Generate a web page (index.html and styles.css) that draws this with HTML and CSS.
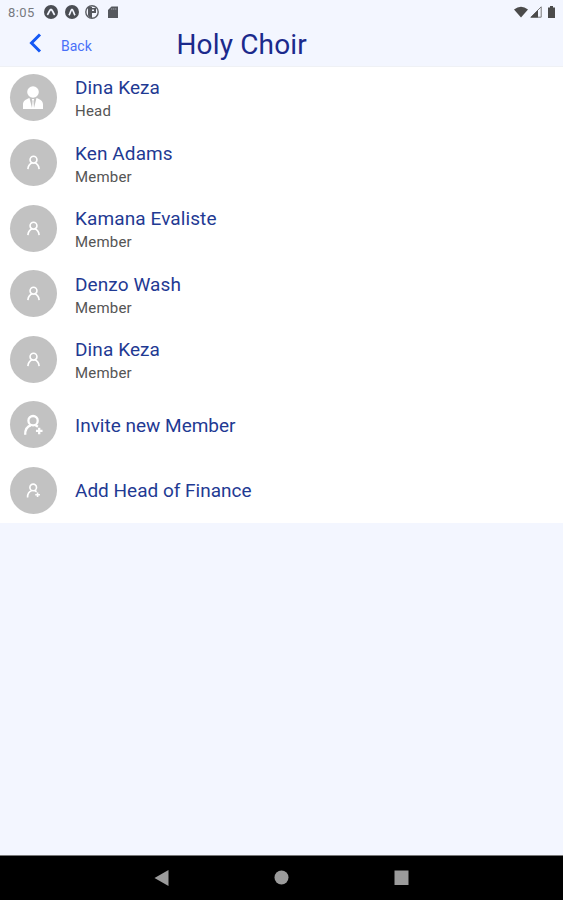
FILE: index.html
```html
<!DOCTYPE html>
<html lang="en">
<head>
  <meta charset="UTF-8" />
  <meta name="viewport" content="width=device-width, initial-scale=1" />
  <title>Holy Choir</title>
  <link rel="stylesheet" href="styles.css">
</head>
<body>
  <!-- shared icons -->
  <svg class="sprite" width="0" height="0">
    <symbol id="icon-user" viewBox="0 0 24 24">
      <circle cx="12" cy="7.500" r="5.500" />
      <path d="M3 22.500c.5-5 3-8.300 6.500-10M21 22.500c-.5-5-3-8.300-6.500-10" />
    </symbol>
    <symbol id="icon-user-add" viewBox="0 0 24 24">
      <circle cx="11.500" cy="7" r="5.300" />
      <path d="M2.500 23c0-5.500 2.500-9.500 6.500-10.500M14 12l3 2M18.500 15v7.500M14.800 18.700h7.500" />
    </symbol>
  </svg>

  <div class="screen">
    <div class="status-bar">
      <span class="clock">8:05</span>
      <svg class="status-icon" viewBox="0 0 14 14">
        <circle cx="7" cy="7" r="7" fill="#4b4e54" />
        <path d="M3.300 9.800C5 8 5.500 4.500 7 4.500S9 8 10.700 9.800" fill="none" stroke="#f3f6ff" stroke-width="1.800" />
      </svg>
      <svg class="status-icon" viewBox="0 0 14 14">
        <circle cx="7" cy="7" r="7" fill="#4b4e54" />
        <path d="M4 10.300C5.500 8 6 4.300 7 4.300S8.500 8 10 10.300" fill="none" stroke="#f3f6ff" stroke-width="1.700" />
      </svg>
      <svg class="status-icon" viewBox="0 0 14 14">
        <circle cx="7" cy="7" r="6.200" fill="#f3f6ff" stroke="#5b5e64" stroke-width="1.400" />
        <path d="M3 2h4v11c-2 0-4-1.500-4-3zM7 3h4v5H7z" fill="#55585e" />
        <path d="M7 4.500h2v1.500H7z" fill="#f3f6ff" />
      </svg>
      <svg class="status-icon" viewBox="0 0 14 14">
        <path d="M5.500 1.500h6.500v11.500H2V5z" fill="#55585e" />
        <path d="M5.800 3v2M7.800 3v2M9.800 3v2" stroke="#9a9da3" stroke-width=".8" />
      </svg>
      <div class="status-right">
        <svg width="14" height="12" viewBox="0 0 14 12"><path d="M0 3.500Q7-2 14 3.500L7 11.500z" fill="#4b4b4b" /></svg>
        <svg width="12" height="12" viewBox="0 0 12 12">
          <path d="M.8 11.200L11.200.8v10.400z" fill="none" stroke="#777" />
          <path d="M.5 11.500L8 4v7.500z" fill="#4b4b4b" />
        </svg>
        <svg class="battery" width="7" height="12" viewBox="0 0 7 12"><path d="M2 0h3v1.500h2V12H0V1.500h2z" fill="#4b4b4b" /></svg>
      </div>
    </div>

    <header class="header">
      <a class="back">
        <svg width="14" height="20" viewBox="0 0 14 20"><path d="M12 1.500L3.500 10l8.500 8.500" /></svg>
        <span>Back</span>
      </a>
      <h1>Holy Choir</h1>
    </header>

    <ul class="members">
      <li>
        <div class="avatar">
          <svg class="icon-head" viewBox="0 0 20 23">
            <circle cx="10" cy="6" r="5.800" />
            <path d="M0 23v-4.500c0-3.500 2.500-5 6.500-6.500L9 22l.5-7-.7-2h2.400l-.7 2 .5 7L13.500 12c4 1.500 6.500 3 6.500 6.500V23z" />
          </svg>
        </div>
        <div class="info"><div class="name">Dina Keza</div><div class="role">Head</div></div>
      </li>
      <li>
        <div class="avatar"><svg class="icon"><use href="#icon-user" /></svg></div>
        <div class="info"><div class="name">Ken Adams</div><div class="role">Member</div></div>
      </li>
      <li>
        <div class="avatar"><svg class="icon"><use href="#icon-user" /></svg></div>
        <div class="info"><div class="name">Kamana Evaliste</div><div class="role">Member</div></div>
      </li>
      <li>
        <div class="avatar"><svg class="icon"><use href="#icon-user" /></svg></div>
        <div class="info"><div class="name">Denzo Wash</div><div class="role">Member</div></div>
      </li>
      <li>
        <div class="avatar"><svg class="icon"><use href="#icon-user" /></svg></div>
        <div class="info"><div class="name">Dina Keza</div><div class="role">Member</div></div>
      </li>
      <li>
        <div class="avatar"><svg class="icon icon-large"><use href="#icon-user-add" /></svg></div>
        <div class="info"><div class="name action">Invite new Member</div></div>
      </li>
      <li>
        <div class="avatar"><svg class="icon"><use href="#icon-user-add" /></svg></div>
        <div class="info"><div class="name action">Add Head of Finance</div></div>
      </li>
    </ul>

    <nav class="nav-bar">
      <svg width="16" height="16" viewBox="0 0 16 16"><path d="M.5 8l14-8v16z" /></svg>
      <svg width="16" height="16" viewBox="0 0 16 16"><circle cx="7.500" cy="7.500" r="7" /></svg>
      <svg width="16" height="16" viewBox="0 0 16 16"><path d="M.5.500h14V15H.5z" /></svg>
    </nav>
  </div>
</body>
</html>
```

FILE: styles.css
```css
* {
  box-sizing: border-box;
}
body {
  margin: 0;
  font-family: Roboto, sans-serif;
  background-color: #f3f6ff;
}
svg {
  display: block;
  flex-shrink: 0;
}
.sprite {
  position: absolute;
}
.screen {
  display: flex;
  flex-direction: column;
  height: 900px;
  overflow: hidden;
}
.status-bar {
  display: flex;
  align-items: center;
  height: 24px;
  padding: 0 8px;
}
.clock {
  width: 29px;
  margin-right: 7px;
  font-size: 13px;
  letter-spacing: 0.4px;
  color: #777a80;
}
.status-icon {
  width: 14px;
  height: 14px;
  margin-right: 6.5px;
}
.status-right {
  display: flex;
  align-items: center;
  gap: 2px;
  margin-left: auto;
}
.battery {
  margin-left: 4px;
}
.header {
  display: flex;
  height: 43px;
  border-bottom: 1px solid #eff1f5;
}
.back {
  display: flex;
  width: 176.5px;
  padding-left: 28px;
  color: #4a70f8;
  font-size: 14px;
}
.back svg {
  margin: 9px 19px 0 0;
  fill: none;
  stroke: #1458f5;
  stroke-width: 3;
}
.back span {
  margin-top: 14px;
  line-height: 17px;
}
.header h1 {
  margin: 4px 0 0;
  font-size: 28px;
  font-weight: 400;
  line-height: 34px;
  letter-spacing: 0.15px;
  color: #1b2a8c;
}
.members {
  display: flex;
  flex-direction: column;
  gap: 18.5px;
  margin: 0;
  padding: 6.5px 9.5px 9px;
  list-style: none;
  background-color: #fff;
}
.members li {
  display: flex;
  align-items: center;
  height: 47px;
}
.avatar {
  display: flex;
  align-items: center;
  justify-content: center;
  width: 47px;
  height: 47px;
  margin-right: 18.5px;
  border-radius: 50%;
  background-color: #c2c2c2;
}
.icon {
  width: 15px;
  height: 17px;
  fill: none;
  stroke: #fff;
  stroke-width: 2.6;
}
.icon-large {
  width: 21px;
  height: 22px;
}
.icon-head {
  width: 20px;
  height: 23px;
  fill: #fff;
}
.info {
  padding-top: 5px;
}
.name {
  font-size: 19px;
  line-height: 24px;
  letter-spacing: 0.1px;
  color: #1f3a93;
}
.name.action {
  margin-top: -3px;
  letter-spacing: 0;
}
.role {
  font-size: 15px;
  line-height: 23px;
  letter-spacing: 0.2px;
  color: #555;
}
.nav-bar {
  display: flex;
  justify-content: center;
  align-items: center;
  gap: 104px;
  height: 45px;
  margin-top: auto;
  border-top: 1px solid #777;
  background-color: #000;
  fill: #9b9b9b;
}
```
